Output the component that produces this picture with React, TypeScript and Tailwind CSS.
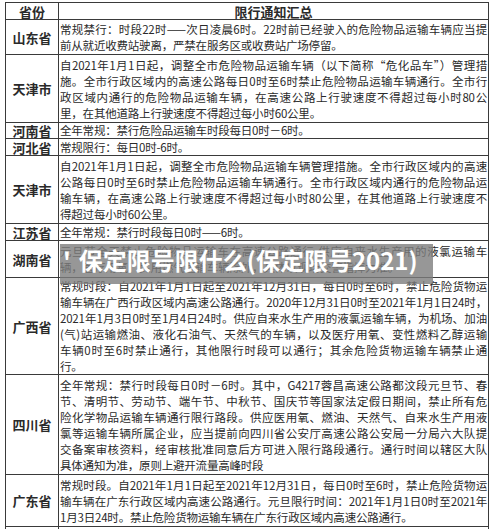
const rows = [
  {
    p: '山东省',
    h: 'h-[35px]',
    lines: [
      '常规禁行：时段22时——次日凌晨6时。22时前已经驶入的危险物品运输车辆应当提',
      '前从就近收费站驶离，严禁在服务区或收费站广场停留。',
    ],
  },
  {
    p: '天津市',
    h: 'h-[68px]',
    lines: [
      '自2021年1月1日起，调整全市危险物品运输车辆（以下简称“危化品车”）管理措',
      '施。全市行政区域内的高速公路每日0时至6时禁止危险物品运输车辆通行。全市行',
      '政区域内通行的危险物品运输车辆，在高速公路上行驶速度不得超过每小时80公',
      '里，在其他道路上行驶速度不得超过每小时60公里。',
    ],
  },
  { p: '河南省', h: 'h-[16px]', lines: ['全年常规：禁行危险品运输车时段每日0时－6时。'] },
  { p: '河北省', h: 'h-[17px]', lines: ['常规限行：每日0时-6时。'] },
  {
    p: '天津市',
    h: 'h-[68px]',
    lines: [
      '自2021年1月1日起，调整全市危险物品运输车辆管理措施。全市行政区域内的高速',
      '公路每日0时至6时禁止危险物品运输车辆通行。全市行政区域内通行的危险物品运',
      '输车辆，在高速公路上行驶速度不得超过每小时80公里，在其他道路上行驶速度不',
      '得超过每小时60公里。',
    ],
  },
  { p: '江苏省', h: 'h-[17px]', lines: ['全年常规：禁行时段每日0时——6时。'] },
  {
    p: '湖南省',
    h: 'h-[37px]',
    lines: [
      '元旦节全天禁止危险物品运输车在高速公路通行,供应自来水生产用的液氯运输车',
      '辆，医疗用氧、民用燃气运输车辆除外，具体以现场交警指挥为准。',
    ],
  },
  {
    p: '广西省',
    h: 'h-[96px]',
    lines: [
      '常规时段：自2021年1月1日起至2021年12月31日，每日0时至6时，禁止危险货物运',
      '输车辆在广西行政区域内高速公路通行。2020年12月31日0时至2021年1月1日24时，',
      '2021年1月3日0时至1月4日24时。供应自来水生产用的液氯运输车辆，为机场、加油',
      '(气)站运输燃油、液化石油气、天然气的车辆，以及医疗用氧、变性燃料乙醇运输',
      '车辆0时至6时禁止通行，其他限行时段可以通行；其余危险货物运输车辆禁止通',
      '行。',
    ],
  },
  {
    p: '四川省',
    h: 'h-[100px]',
    lines: [
      '全年常规：禁行时段每日0时－6时。其中，G4217蓉昌高速公路都汶段元旦节、春',
      '节、清明节、劳动节、端午节、中秋节、国庆节等国家法定假日期间，禁止所有危',
      '险化学物品运输车辆通行限行路段。供应医用氧、燃油、天然气、自来水生产用液',
      '氯等运输车辆所属企业，应当提前向四川省公安厅高速公路公安局一分局六大队提',
      '交备案审核资料，经审核批准同意后方可进入限行路段通行。通行时间以辖区大队',
      '具体通知为准，原则上避开流量高峰时段',
    ],
  },
  {
    p: '广东省',
    h: 'h-[52px]',
    lines: [
      '常规时段。自2021年1月1日起至2021年12月31日，每日0时至6时，禁止危险货物运',
      '输车辆在广东行政区域内高速公路通行。元旦限行时间：2021年1月1日0时至2021年',
      '1月3日24时。禁止危险货物运输车辆在广东行政区域内高速公路通行。',
    ],
  },
];

export default function App() {
  return (
    <div className="relative w-[500px] h-[529px] overflow-hidden bg-white pl-[5px] pt-[2px] font-['Noto_Sans_CJK_SC',sans-serif] text-[#2a2a2a]">
      <table className="w-[484px] table-fixed border-collapse">
        <colgroup>
          <col className="w-[53px]" />
          <col />
        </colgroup>
        <tbody>
          <tr className="h-[17px]">
            <td className="border border-[#3a3a3a] p-0 text-center text-[13px] font-bold leading-none">省份</td>
            <td className="border border-[#3a3a3a] p-0 text-center text-[13px] font-bold leading-none">限行通知汇总</td>
          </tr>
          {rows.map((r, i) => (
            <tr key={i} className={r.h}>
              <td className="border border-[#3a3a3a] p-0 text-center text-[13px] font-bold leading-none text-[#2a2a2a]">
                {r.p}
              </td>
              <td
                className={
                  r.lines.length === 1
                    ? 'border border-[#3a3a3a] p-0 pl-px text-[11.5px] leading-[15px]'
                    : 'border border-[#3a3a3a] p-0 pl-px text-[11.5px] leading-[16px]'
                }
              >
                {r.lines.map((l, j) => (
                  <div
                    key={j}
                    className={
                      j < r.lines.length - 1
                        ? 'whitespace-nowrap tracking-[-0.2px] [text-align-last:justify] pr-px'
                        : 'whitespace-nowrap tracking-[-0.2px]'
                    }
                  >
                    {l}
                  </div>
                ))}
              </td>
            </tr>
          ))}
          <tr className="h-[20px]">
            <td className="border border-[#3a3a3a] p-0" />
            <td className="border border-[#3a3a3a] p-0" />
          </tr>
        </tbody>
      </table>

      {/* caption band over the table */}
      <div className="absolute left-[60px] top-[244px] h-[40px] w-[373px] bg-[rgba(125,125,125,0.8)]">
        <div className="flex items-start pl-[3px] pt-[2px] text-[24px] font-bold leading-[28px] text-white">
          <span className="mr-[8px]">'</span>
          <span>保定限号限什么(保定限号2021)</span>
        </div>
      </div>
    </div>
  );
}
